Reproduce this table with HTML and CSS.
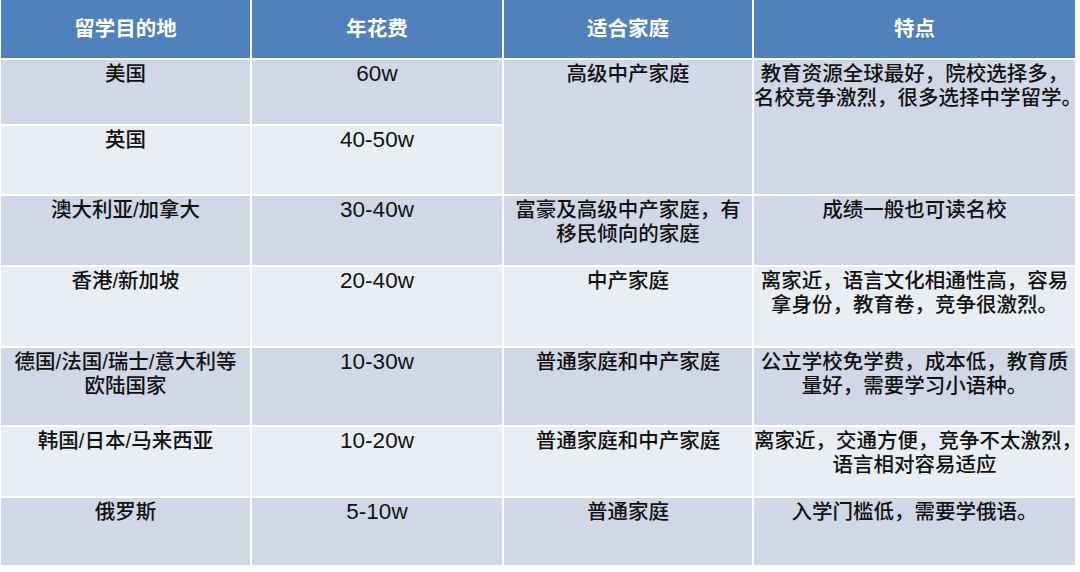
FILE: index.html
```html
<!DOCTYPE html>
<html lang="zh-CN">
<head>
<meta charset="utf-8">
<title>留学目的地</title>
<link rel="stylesheet" href="styles.css">
</head>
<body>
<div class="table">
  <div class="cell head">留学目的地</div>
  <div class="cell head">年花费</div>
  <div class="cell head">适合家庭</div>
  <div class="cell head">特点</div>

  <div class="cell dark">美国</div>
  <div class="cell dark num">60w</div>
  <div class="cell dark span2">高级中产家庭</div>
  <div class="cell dark span2">教育资源全球最好，院校选择多，<br>名校竞争激烈，很多选择中学留学。</div>

  <div class="cell light">英国</div>
  <div class="cell light num">40-50w</div>

  <div class="cell dark">澳大利亚/加拿大</div>
  <div class="cell dark num">30-40w</div>
  <div class="cell dark">富豪及高级中产家庭，有<br>移民倾向的家庭</div>
  <div class="cell dark">成绩一般也可读名校</div>

  <div class="cell light">香港/新加坡</div>
  <div class="cell light num">20-40w</div>
  <div class="cell light">中产家庭</div>
  <div class="cell light">离家近，语言文化相通性高，容易<br>拿身份，教育卷，竞争很激烈。</div>

  <div class="cell dark">德国/法国/瑞士/意大利等<br>欧陆国家</div>
  <div class="cell dark num">10-30w</div>
  <div class="cell dark">普通家庭和中产家庭</div>
  <div class="cell dark">公立学校免学费，成本低，教育质<br>量好，需要学习小语种。</div>

  <div class="cell light">韩国/日本/马来西亚</div>
  <div class="cell light num">10-20w</div>
  <div class="cell light">普通家庭和中产家庭</div>
  <div class="cell light">离家近，交通方便，竞争不太激烈，<br>语言相对容易适应</div>

  <div class="cell dark">俄罗斯</div>
  <div class="cell dark num">5-10w</div>
  <div class="cell dark">普通家庭</div>
  <div class="cell dark">入学门槛低，需要学俄语。</div>
</div>
</body>
</html>
```

FILE: styles.css
```css
html, body {
  margin: 0;
  padding: 0;
  background: #ffffff;
}
body {
  width: 1080px;
  height: 572px;
  overflow: hidden;
  font-family: "Liberation Sans", "Noto Sans CJK SC", sans-serif;
}
.table {
  display: grid;
  grid-template-columns: 249px 250px 248px 321px;
  grid-template-rows: 58px 64px 68px 69px 79px 77px 69px 67px;
  gap: 2px;
  padding-left: 1px;
  background: #ffffff;
}
.cell {
  font-size: 20.5px;
  line-height: 24px;
  font-weight: 500;
  color: #111111;
  text-align: center;
  white-space: nowrap;
  padding-top: 2px;
  overflow: visible;
}
.num {
  font-size: 22.5px;
  font-weight: 400;
}
.head {
  background: #4f81bd;
  color: #ffffff;
  font-weight: bold;
  padding-top: 0;
  display: flex;
  align-items: center;
  justify-content: center;
}
.dark {
  background: #d0d8e8;
}
.light {
  background: #e9edf4;
}
.span2 {
  grid-row: span 2;
}
```
